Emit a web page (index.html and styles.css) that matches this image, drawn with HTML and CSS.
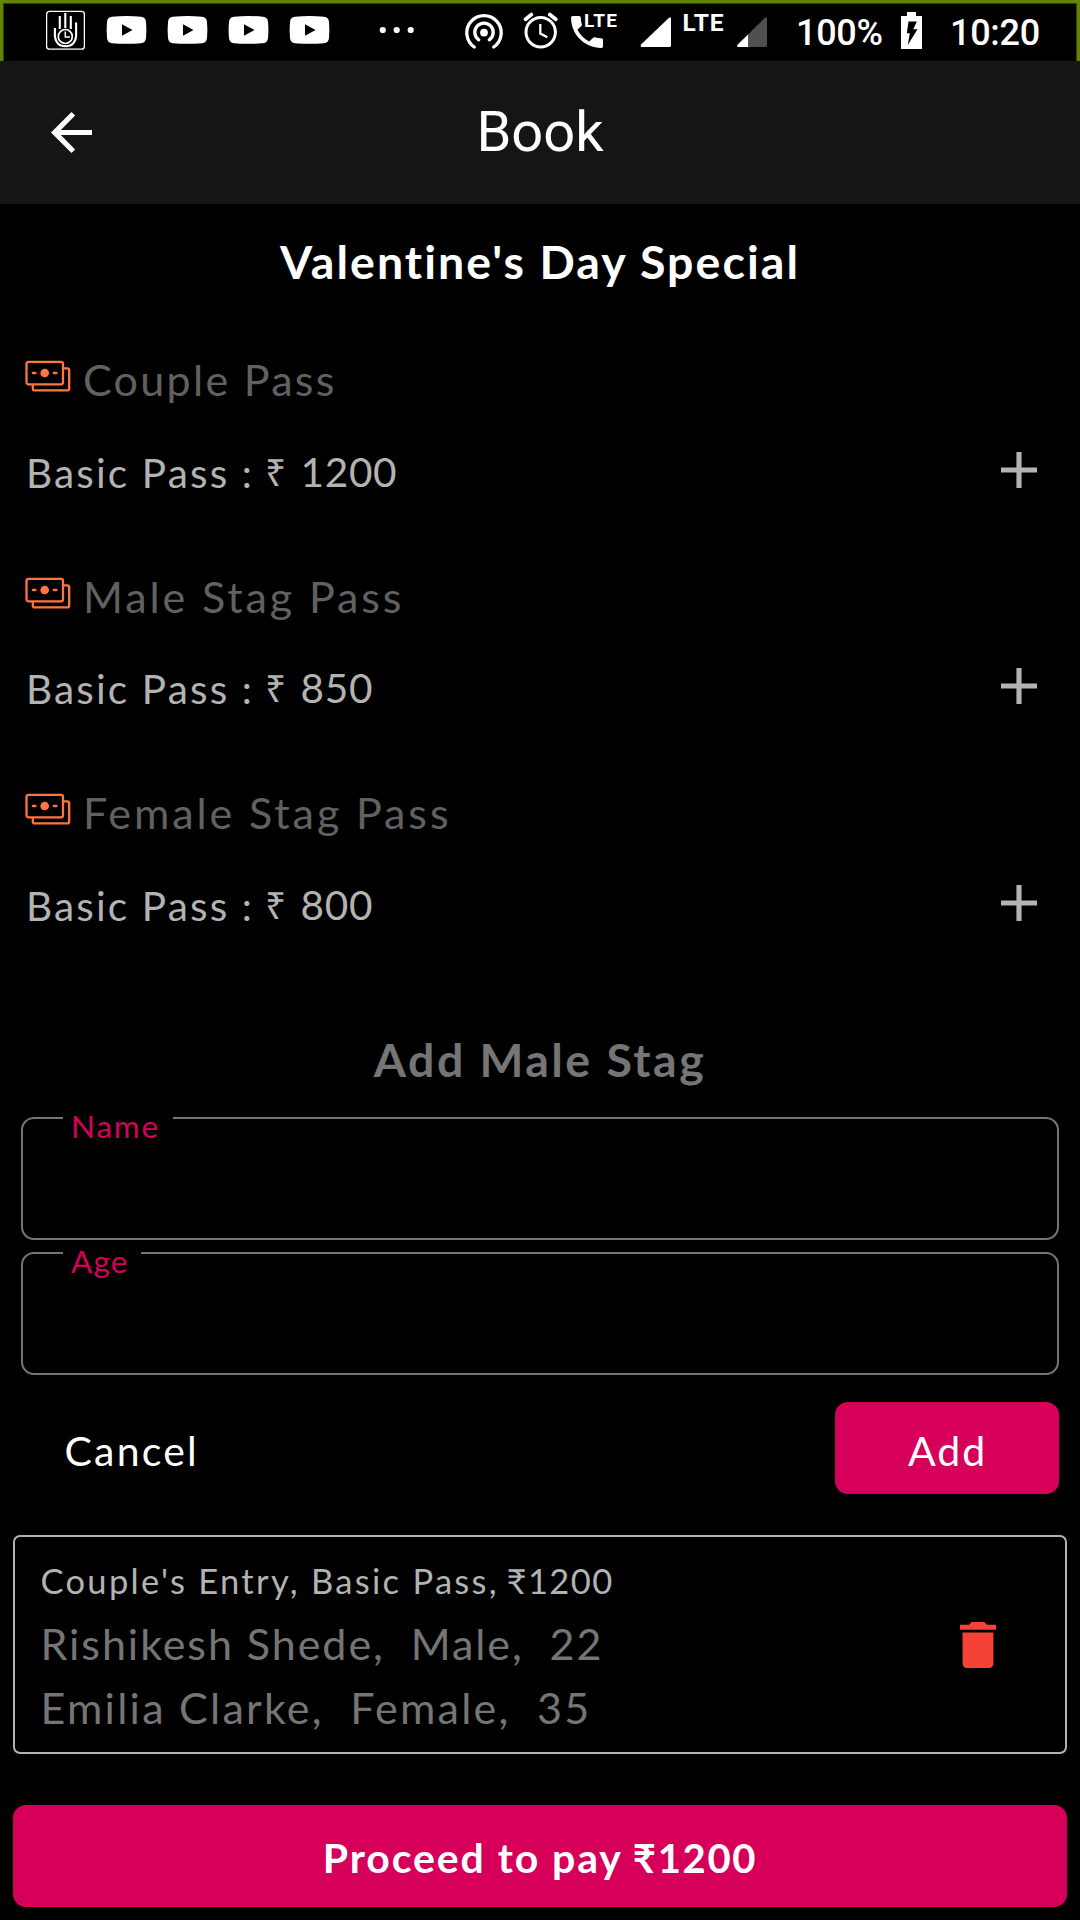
FILE: index.html
```html
<!DOCTYPE html>
<html lang="en">
<head>
<meta charset="utf-8">
<title>Book</title>
<link rel="stylesheet" href="styles.css">
</head>
<body>
<svg class="defs" aria-hidden="true">
  <symbol id="video" viewBox="0 0 41 61">
    <path fill="#fff" d="M6 16.8Q20.500 15.200 35 16.800Q39.600 17.300 40 22Q40.800 30 40 38Q39.600 42.800 35 43.300Q20.500 44.400 6 43.300Q1.400 42.800 1 38Q.2 30 1 22Q1.400 17.300 6 16.800Z"/>
    <path fill="#000" d="M16 24.300L26.500 30.100L16 35.800Z"/>
  </symbol>
  <symbol id="cash" viewBox="0 0 46 32">
    <g fill="none" stroke="#ff7643" stroke-width="2.300">
      <rect x="1.500" y="1.800" width="36.500" height="22.500" rx="2"/>
      <path d="M38 8.300H42.200Q44.200 8.300 44.200 10.300V28.400Q44.200 30.400 42.200 30.400H9.800Q7.800 30.400 7.800 28.400V24.500"/>
      <path d="M7.800 13H10.500M28.800 13H31.500" stroke-linecap="round"/>
    </g>
    <circle cx="19.700" cy="13" r="4.300" fill="#ff7643"/>
  </symbol>
  <symbol id="plus" viewBox="5 5 14 14">
    <path fill="#b3b3b3" d="M19 13h-6v6h-2v-6H5v-2h6V5h2v6h6z"/>
  </symbol>
</svg>

<div class="status">
  <svg class="palm" viewBox="46 0 39 61" width="39" height="61" fill="none" stroke="#fff">
    <rect x="46.600" y="11.400" width="37.800" height="37.800" rx="3" stroke-width="1.300"/>
    <g stroke-width="2.100">
      <path d="M54.900 28V36Q56 46.300 65.500 46.300Q75 46.300 76.100 36V22.500M59.800 16V29M65.300 13V28M70.800 16V29"/>
      <circle cx="65.300" cy="36.500" r="7" stroke-width="1.700"/>
      <path d="M65.300 31.500V37H70" stroke-width="1.500"/>
    </g>
  </svg>
  <div class="videos">
    <svg width="41" height="61"><use href="#video"/></svg>
    <svg width="41" height="61"><use href="#video"/></svg>
    <svg width="41" height="61"><use href="#video"/></svg>
    <svg width="41" height="61"><use href="#video"/></svg>
  </div>
  <svg class="dots" viewBox="379 0 36 61" width="36" height="61" fill="#fff">
    <circle cx="382.800" cy="30" r="3.100"/><circle cx="396.700" cy="30" r="3.100"/><circle cx="410.700" cy="30" r="3.100"/>
  </svg>
  <svg class="hotspot" viewBox="465 0 38 61" width="38" height="61" fill="none" stroke="#fff" stroke-width="3.300" stroke-linecap="round">
    <circle cx="484" cy="32.600" r="3.900" fill="#fff" stroke="none"/>
    <path d="M478.700 39.800A9.200 9.200 0 1 1 489.300 39.800"/>
    <path d="M474.200 47A17.200 17.200 0 1 1 493.800 47"/>
  </svg>
  <svg class="alarm" viewBox="523 0 36 61" width="36" height="61" fill="none" stroke="#fff">
    <circle cx="540.700" cy="32.200" r="14.700" stroke-width="3"/>
    <path d="M540.300 24V33.500L547.300 37.300" stroke-width="2.300"/>
    <path d="M525.600 19.300L531.300 14.600M549.800 14.600L555.700 19.300" stroke-width="3.800" stroke-linecap="round"/>
  </svg>
  <svg class="call" viewBox="571 0 46 61" width="46" height="61">
    <path fill="#fff" transform="translate(565.700 10.700) scale(1.777)" d="M6.620 10.790c1.440 2.830 3.760 5.140 6.590 6.590l2.200-2.200c.27-.27.67-.36 1.020-.24 1.120.37 2.330.57 3.570.57.55 0 1 .45 1 1V20c0 .55-.45 1-1 1-9.390 0-17-7.610-17-17 0-.55.45-1 1-1h3.500c.55 0 1 .45 1 1 0 1.250.2 2.450.57 3.570.11.35.03.74-.25 1.020l-2.200 2.200z"/>
    <text class="net" x="584" y="26.800" font-size="19" textLength="33">LTE</text>
  </svg>
  <svg class="signal" viewBox="640 0 31 61" width="31" height="61" fill="#fff">
    <path d="M641.500 47H669.500Q671 47 671 45.500V18Q670.500 16.500 669 17.700L641 44.500Q640 46.500 641.500 47Z"/>
  </svg>
  <svg class="lte" viewBox="683 0 41 61" width="41" height="61">
    <text class="net" x="682.500" y="31" font-size="24.500" textLength="41">LTE</text>
  </svg>
  <svg class="signal2" viewBox="737 0 30 61" width="30" height="61">
    <path fill="#505050" d="M748 34.500L765 17.700Q766.700 16.500 767 18V45.500Q767 47 765.500 47H748Z"/>
    <path fill="#fff" d="M738 47H748V34.500L737.500 44.700Q736.600 46.500 738 47Z"/>
  </svg>
  <span class="charge">100%</span>
  <svg class="battery" viewBox="901 0 21 61" width="21" height="61">
    <path fill="#fff" d="M907 12H916V16H922V49H901V16H907Z"/>
    <path fill="#000" d="M908.500 21.500H916.800L913.300 29.200H917.500L907.800 45L909.800 33.200H906.800Z"/>
  </svg>
  <span class="clock">10:20</span>
</div>

<header class="bar">
  <svg class="back" viewBox="4 4 16 16" width="41" height="41"><path fill="#fff" d="M20 11H7.830l5.590-5.590L12 4l-8 8 8 8 1.410-1.410L7.830 13H20v-2z"/></svg>
  <h1 class="page-title">Book</h1>
</header>

<main class="content">
  <h2 class="event">Valentine's Day Special</h2>

  <div class="passes">
    <section class="pass">
      <div class="pass-head"><svg class="cash" width="46" height="32"><use href="#cash"/></svg><span class="couple">Couple Pass</span></div>
      <div class="pass-row"><span class="kind">Basic Pass :</span><span class="rupee">₹</span><span class="price">1200</span><svg class="plus" width="36" height="36"><use href="#plus"/></svg></div>
    </section>
    <section class="pass">
      <div class="pass-head"><svg class="cash" width="46" height="32"><use href="#cash"/></svg><span>Male Stag Pass</span></div>
      <div class="pass-row"><span class="kind">Basic Pass :</span><span class="rupee">₹</span><span class="price">850</span><svg class="plus" width="36" height="36"><use href="#plus"/></svg></div>
    </section>
    <section class="pass">
      <div class="pass-head"><svg class="cash" width="46" height="32"><use href="#cash"/></svg><span>Female Stag Pass</span></div>
      <div class="pass-row"><span class="kind">Basic Pass :</span><span class="rupee">₹</span><span class="price">800</span><svg class="plus" width="36" height="36"><use href="#plus"/></svg></div>
    </section>
  </div>

  <form class="guest">
    <h3 class="form-title">Add Male Stag</h3>
    <div class="field"><label class="label name">Name</label></div>
    <div class="field"><label class="label age">Age</label></div>
    <div class="actions">
      <button type="button" class="cancel">Cancel</button>
      <button type="button" class="add">Add</button>
    </div>
  </form>

  <section class="booking">
    <div class="people">
      <p class="entry">Couple's Entry, Basic Pass, <span class="sum">₹1200</span></p>
      <p class="person">Rishikesh Shede,  Male,  22</p>
      <p class="person second">Emilia Clarke,  Female,  35</p>
    </div>
    <svg class="trash" viewBox="5 3 14 18" width="36" height="46.500"><path fill="#f44336" d="M6 19c0 1.100.9 2 2 2h8c1.100 0 2-.9 2-2V7H6v12zM19 4h-3.500l-1-1h-5l-1 1H5v2h14V4z"/></svg>
  </section>

  <button type="button" class="pay"><span class="pay-text">Proceed to pay</span><span class="pay-sum">₹1200</span></button>
</main>
</body>
</html>
```

FILE: styles.css
```css
* { box-sizing: border-box; }

body {
  margin: 0;
  width: 1080px;
  height: 1920px;
  background: #000;
  color: #fff;
  font-family: Lato, "Noto Sans", sans-serif;
  display: flex;
  flex-direction: column;
  overflow: hidden;
}

h1, h2, h3, p { margin: 0; font-weight: 400; }
svg { display: block; flex: none; }
.defs { position: absolute; width: 0; height: 0; }

button {
  border: 0;
  padding: 0;
  background: none;
  color: #fff;
  font: 400 41px Lato, "Noto Sans", sans-serif;
}

/* system status bar */
.status {
  height: 61px;
  flex: none;
  display: flex;
  padding-left: 46px;
  box-shadow: inset 0 3px #628400, inset 3px 0 #628400, inset -3px 0 #628400,
    inset 0 4px #354800, inset 4px 0 #354800, inset -4px 0 #354800;
}
.videos { display: flex; gap: 20px; margin-left: 21px; }
.dots { margin-left: 49px; }
.hotspot { margin-left: 50px; }
.alarm { margin-left: 20px; }
.call { margin-left: 12px; }
.signal { margin-left: 23px; }
.lte { margin-left: 12px; }
.signal2 { margin-left: 13px; }
.net { font-family: Roboto, sans-serif; font-weight: 700; fill: #fff; }
.charge, .clock {
  font: 500 36px/67px Roboto, sans-serif;
  letter-spacing: -0.300px;
  white-space: nowrap;
}
.charge { width: 105px; margin-left: 29px; }
.clock { margin-left: 28px; }

/* app bar */
.bar {
  height: 143px;
  flex: none;
  display: grid;
  grid-template-columns: 92px 1fr 92px;
  align-items: center;
  background: #151515;
}
.back { justify-self: end; }
.page-title {
  font: 400 56px/142px Roboto, sans-serif;
  height: 143px;
  text-align: center;
}

.content { display: flex; flex-direction: column; }

.event {
  height: 112px;
  font-size: 46.500px;
  font-weight: 700;
  line-height: 114px;
  letter-spacing: 2.050px;
  text-align: center;
}

.passes {
  display: flex;
  flex-direction: column;
  gap: 31.700px;
  margin-top: 30px;
  padding: 0 43px 0 25px;
}
.pass-head {
  display: flex;
  align-items: center;
  gap: 12px;
  height: 65px;
  padding-top: 2px;
  font-size: 43px;
  line-height: 65px;
  letter-spacing: 2.900px;
  color: #616161;
}
.couple { letter-spacing: 2.300px; }
.cash { margin-bottom: 7px; }
.pass-row {
  display: flex;
  align-items: center;
  height: 120px;
  font-size: 40.500px;
  color: #b3b3b3;
}
.kind { width: 240px; padding: 2px 0 0 1px; letter-spacing: 2.150px; }
.rupee { width: 35.500px; font-family: "Noto Sans", sans-serif; font-size: 37px; }
.price { letter-spacing: 0.700px; }
.plus { margin-left: auto; margin-bottom: 3px; }

/* guest form */
.guest {
  display: flex;
  flex-direction: column;
  gap: 12.500px;
  margin-top: 65px;
  padding: 0 21px;
}
.form-title {
  font-size: 46.500px;
  font-weight: 700;
  line-height: 60px;
  letter-spacing: 2.450px;
  text-align: center;
  color: #757575;
  margin-bottom: 15.500px;
}
.field {
  position: relative;
  height: 122.500px;
  border: 2px solid #757575;
  border-radius: 13px;
}
.label {
  position: absolute;
  left: 39.500px;
  top: -12px;
  padding-left: 8.500px;
  background: #000;
  color: #d6005b;
  font-size: 31.500px;
  line-height: 39px;
}
.name { width: 110px; letter-spacing: 1.800px; }
.age { width: 78px; letter-spacing: 1.200px; }
.actions {
  display: flex;
  justify-content: space-between;
  height: 92px;
  margin-top: 15px;
}
.cancel { margin-left: 43.500px; letter-spacing: 2.200px; padding-top: 5px; }
.add {
  width: 224px;
  padding: 5px 0 0 1px;
  border-radius: 13px;
  background: #d6005b;
  letter-spacing: 2px;
}

/* booked guests */
.booking {
  display: flex;
  align-items: center;
  justify-content: space-between;
  height: 219px;
  margin: 41px 13px 0;
  padding: 0 69px 0 25.500px;
  border: 2px solid #b3b3b3;
  border-radius: 7px;
}
.people { margin-top: 1px; }
.entry, .person { white-space: pre; }
.entry {
  font-size: 34.500px;
  line-height: 62px;
  letter-spacing: 2.300px;
  color: #b3b3b3;
}
.sum { margin-left: -3.500px; letter-spacing: 1.400px; }
.person {
  font-size: 43px;
  line-height: 64px;
  letter-spacing: 1.950px;
  color: #757575;
}
.second { letter-spacing: 2.250px; }

.pay {
  display: flex;
  align-items: center;
  justify-content: center;
  gap: 10px;
  height: 102px;
  margin: 51px 13px 0;
  padding-top: 3px;
  border-radius: 13px;
  background: #d6005b;
  font-weight: 700;
}
.pay-text { letter-spacing: 1.900px; }
.pay-sum { font-size: 40px; letter-spacing: 1.700px; }
```
